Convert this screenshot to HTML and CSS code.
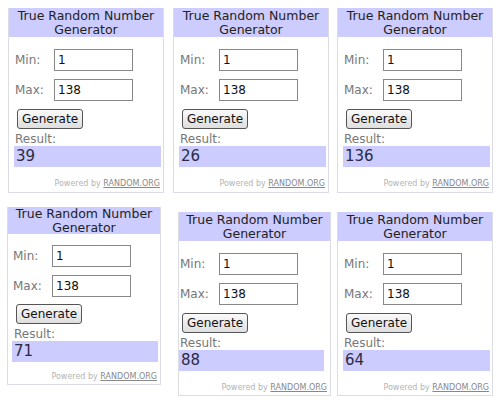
FILE: index.html
```
<!DOCTYPE html>
<html lang="en">
<head>
    <meta charset="utf-8" />
    <title>True Random Number Generator</title>
    <link rel="stylesheet" href="styles.css">
</head>
<body>
    <div class="board">
        <!-- row 1 -->
        <div class="cell">
            <div class="widget w1">
                <div class="head">True Random Number<br>Generator</div>
                <div class="field"><span class="label">Min:</span><input class="num" value="1"></div>
                <div class="field"><span class="label">Max:</span><input class="num" value="138"></div>
                <button class="gen">Generate</button>
                <div class="res-label">Result:</div>
                <div class="res">39</div>
                <div class="powered">Powered by <a>RANDOM.ORG</a></div>
            </div>
        </div>
        <div class="cell">
            <div class="widget w2">
                <div class="head">True Random Number<br>Generator</div>
                <div class="field"><span class="label">Min:</span><input class="num" value="1"></div>
                <div class="field"><span class="label">Max:</span><input class="num" value="138"></div>
                <button class="gen">Generate</button>
                <div class="res-label">Result:</div>
                <div class="res">26</div>
                <div class="powered">Powered by <a>RANDOM.ORG</a></div>
            </div>
        </div>
        <div class="cell">
            <div class="widget w3">
                <div class="head">True Random Number<br>Generator</div>
                <div class="field"><span class="label">Min:</span><input class="num" value="1"></div>
                <div class="field"><span class="label">Max:</span><input class="num" value="138"></div>
                <button class="gen">Generate</button>
                <div class="res-label">Result:</div>
                <div class="res">136</div>
                <div class="powered">Powered by <a>RANDOM.ORG</a></div>
            </div>
        </div>

        <!-- row 2 -->
        <div class="cell">
            <div class="widget w4 compact">
                <div class="head">True Random Number<br>Generator</div>
                <div class="field"><span class="label">Min:</span><input class="num" value="1"></div>
                <div class="field"><span class="label">Max:</span><input class="num" value="138"></div>
                <button class="gen">Generate</button>
                <div class="res-label">Result:</div>
                <div class="res">71</div>
                <div class="powered">Powered by <a>RANDOM.ORG</a></div>
            </div>
        </div>
        <div class="cell">
            <div class="widget w5">
                <div class="head">True Random Number<br>Generator</div>
                <div class="field"><span class="label">Min:</span><input class="num" value="1"></div>
                <div class="field"><span class="label">Max:</span><input class="num" value="138"></div>
                <button class="gen">Generate</button>
                <div class="res-label">Result:</div>
                <div class="res">88</div>
                <div class="powered">Powered by <a>RANDOM.ORG</a></div>
            </div>
        </div>
        <div class="cell">
            <div class="widget w6">
                <div class="head">True Random Number<br>Generator</div>
                <div class="field"><span class="label">Min:</span><input class="num" value="1"></div>
                <div class="field"><span class="label">Max:</span><input class="num" value="138"></div>
                <button class="gen">Generate</button>
                <div class="res-label">Result:</div>
                <div class="res">64</div>
                <div class="powered">Powered by <a>RANDOM.ORG</a></div>
            </div>
        </div>
    </div>
</body>
</html>
```

FILE: styles.css
```
/* six screenshots of the random.org widget, pasted in a 3 x 2 grid */
body {
    margin: 0;
    background: #fff;
    font-family: "DejaVu Sans", Verdana, sans-serif;
}

.board {
    display: grid;
    grid-template-columns: 168px 166px 166px;
    grid-template-rows: 200px 202px;
    width: 500px;
    height: 402px;
}

.widget {
    box-sizing: border-box;
    width: 156px;
    height: 185px;
    border: 1px solid #dcdce6;
    border-top: none;
    display: flex;
    flex-direction: column;
    align-items: flex-start;
}

/* where each screenshot was pasted */
.w1 { margin: 8px 0 0 8px; }
.w2 { margin: 8px 0 0 5px; }
.w3 { margin: 8px 0 0 3px; }
.w4 { margin: 7px 0 0 7px; width: 154px; height: 178px; }
.w5 { margin: 12px 0 0 10px; width: 153px; height: 184px; }
.w6 { margin: 12px 0 0 3px; height: 184px; }

.head {
    align-self: stretch;
    height: 29px;
    background: #ccccff;
    color: #222;
    font-size: 12.5px;
    line-height: 14px;
    text-align: center;
    padding-top: 1px;
    box-sizing: border-box;
}

.field {
    display: flex;
    align-items: center;
    margin-top: 8px;
    padding-left: 6px;
}

.head + .field {
    margin-top: 12px;
}

.label {
    width: 39px;
    font-size: 12px;
    color: #777;
}

.num {
    box-sizing: border-box;
    width: 79px;
    height: 22px;
    margin: 0;
    border: 1px solid #888;
    padding: 0 3px;
    font-family: "DejaVu Sans", Verdana, sans-serif;
    font-size: 12px;
    color: #111;
}

.gen {
    box-sizing: border-box;
    width: 66px;
    height: 20px;
    margin: 8px 0 0 8px;
    padding: 0;
    border: 1px solid #555;
    border-radius: 3px;
    background: linear-gradient(#fafafa, #dedede);
    font-family: "DejaVu Sans", Verdana, sans-serif;
    font-size: 12px;
    color: #111;
}

.res-label {
    margin: 4px 0 0 6px;
    font-size: 12px;
    line-height: 13px;
    color: #777;
}

.res {
    box-sizing: border-box;
    align-self: stretch;
    height: 21px;
    margin: 0 2px 0 5px;
    padding: 1px 0 0 2px;
    background: #ccccff;
    color: #2a2a44;
    font-size: 15px;
    line-height: 19px;
}

.powered {
    align-self: stretch;
    margin-top: 12px;
    padding-right: 3px;
    text-align: right;
    font-size: 8px;
    color: #b4b4b4;
}

.powered a {
    color: #888;
    text-decoration: underline;
}

/* the bottom-left shot was taken a little smaller */
.compact .head { height: 27px; padding-top: 0; line-height: 13.5px; }
.compact .head + .field { margin-top: 11px; }
.compact .field { padding-left: 5px; }
.compact .gen { margin-top: 7px; }
.compact .res { margin-left: 4px; }
.compact .powered { margin-top: 10px; }

/* the bottom-middle shot has its content sitting close to the frame */
.w5 .field { padding-left: 1px; }
.w5 .gen { margin-left: 3px; }
.w5 .res-label { margin-left: 1px; }
.w5 .res { margin: 0 6px 0 0; }
```
